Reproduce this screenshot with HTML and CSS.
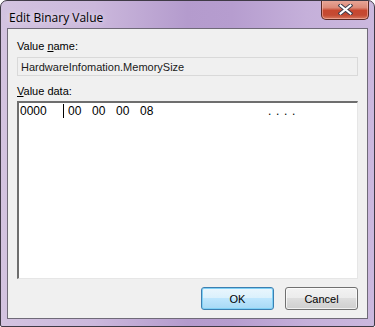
FILE: index.html
```html
<!DOCTYPE html>
<html lang="en">
<head>
<meta charset="UTF-8">
<title>Edit Binary Value</title>
<link rel="stylesheet" href="styles.css">
</head>
<body>
<div class="window">
  <div class="titlebar">
    <span class="title">Edit Binary Value</span>
    <button class="close-btn">
      <svg width="15" height="11" viewBox="0 0 15 11">
        <path d="M2.5 1.5 L12.5 9.5 M12.5 1.5 L2.5 9.5" stroke="#3b3b4a" stroke-width="4" stroke-linecap="square" fill="none"/>
        <path d="M2.5 1.5 L12.5 9.5 M12.5 1.5 L2.5 9.5" stroke="#ffffff" stroke-width="2" stroke-linecap="square" fill="none"/>
      </svg>
    </button>
  </div>
  <div class="client">
    <div class="label">Value <u>n</u>ame:</div>
    <div class="name-field">HardwareInfomation.MemorySize</div>
    <div class="label label-data"><u>V</u>alue data:</div>
    <div class="data-box">
      <div class="hex-row">
        <span class="offset">0000</span>
        <span class="bytes">
          <span class="byte">00</span>
          <span class="byte">00</span>
          <span class="byte">00</span>
          <span class="byte">08</span>
        </span>
        <span class="ascii">
          <span class="ch">.</span><span class="ch">.</span><span class="ch">.</span><span class="ch">.</span>
        </span>
      </div>
    </div>
    <div class="buttons">
      <button class="btn btn-default">OK</button>
      <button class="btn">Cancel</button>
    </div>
  </div>
</div>
</body>
</html>
```

FILE: styles.css
```css
html, body {
  margin: 0;
  padding: 0;
  background: #ffffff;
}
.window {
  box-sizing: border-box;
  width: 375px;
  height: 327px;
  border: 1px solid #3f3a46;
  border-radius: 7px 7px 2px 2px;
  background: linear-gradient(90deg, #d3c3e0 0%, #cbb8dc 25%, #b49bcd 50%, #b69dcf 62%, #c5b0da 82%, #cbb8de 100%);
  display: flex;
  flex-direction: column;
  overflow: hidden;
}
.titlebar {
  display: flex;
  align-items: flex-start;
  height: 27px;
  flex-shrink: 0;
}
.title {
  font-family: "Open Sans", "Noto Sans", sans-serif;
  font-size: 12px;
  color: #000000;
  padding: 8px 0 0 8px;
  text-shadow: 0 0 6px rgba(255, 255, 255, 0.8);
}
.close-btn {
  margin-left: auto;
  margin-right: 5px;
  margin-top: -1px;
  width: 48px;
  height: 20px;
  padding: 0;
  border: 1px solid #5a2a24;
  border-top: none;
  border-radius: 0 0 5px 5px;
  background: linear-gradient(#e9a99b 0%, #dd8a78 40%, #c7472f 55%, #c44a33 80%, #d77a5f 100%);
  box-shadow: inset 0 0 0 1px rgba(255, 200, 190, 0.5);
  display: flex;
  align-items: center;
  justify-content: center;
}
.close-btn svg {
  display: block;
}
.client {
  margin: 0 6px 0 6px;
  height: 291px;
  box-sizing: border-box;
  border: 1px solid #6f6a78;
  background: #f0f0f0;
  padding: 11px 9px 0 9px;
  display: flex;
  flex-direction: column;
  font-family: "Liberation Sans", Arial, sans-serif;
  font-size: 11px;
  color: #000000;
}
.label {
  line-height: 13px;
  height: 13px;
}
.label u {
  text-decoration: underline;
}
.name-field {
  margin-top: 4px;
  height: 19px;
  box-sizing: border-box;
  border: 1px solid #d9d9d9;
  background: #f0f0f0;
  padding: 3px 0 0 3px;
  line-height: 13px;
  color: #1a1a1a;
}
.label-data {
  margin-top: 9px;
}
.data-box {
  margin-top: 3px;
  height: 178px;
  box-sizing: border-box;
  background: #ffffff;
  border-top: 2px solid #6e6e6e;
  border-left: 2px solid #6e6e6e;
  border-right: 1px solid #e6e6e6;
  border-bottom: 1px solid #e6e6e6;
  padding: 1px 0 0 1px;
  font-size: 12px;
}
.hex-row {
  display: flex;
  height: 14px;
  line-height: 14px;
}
.offset {
  width: 43px;
}
.bytes {
  display: flex;
  border-left: 1px solid #000000;
  padding-left: 4px;
  width: 200px;
}
.byte {
  width: 24px;
}
.ascii {
  display: flex;
  margin-left: 0;
}
.ch {
  width: 8px;
}
.buttons {
  display: flex;
  justify-content: flex-end;
  gap: 11px;
  margin-top: 8px;
}
.btn {
  width: 73px;
  height: 23px;
  box-sizing: border-box;
  border: 1px solid #707070;
  border-radius: 3px;
  background: linear-gradient(#f2f2f2 0%, #ebebeb 50%, #dddddd 50%, #cfcfcf 100%);
  box-shadow: inset 0 0 0 1px rgba(255, 255, 255, 0.7);
  font-family: "Liberation Sans", Arial, sans-serif;
  font-size: 11px;
  color: #000000;
  padding: 0;
}
.btn-default {
  border-color: #3c7fb1;
  background: linear-gradient(#eaf6fd 0%, #d9f0fc 50%, #bee6fd 50%, #a7d9f5 100%);
  box-shadow: inset 0 0 0 1px #7fd0f5;
}
```
